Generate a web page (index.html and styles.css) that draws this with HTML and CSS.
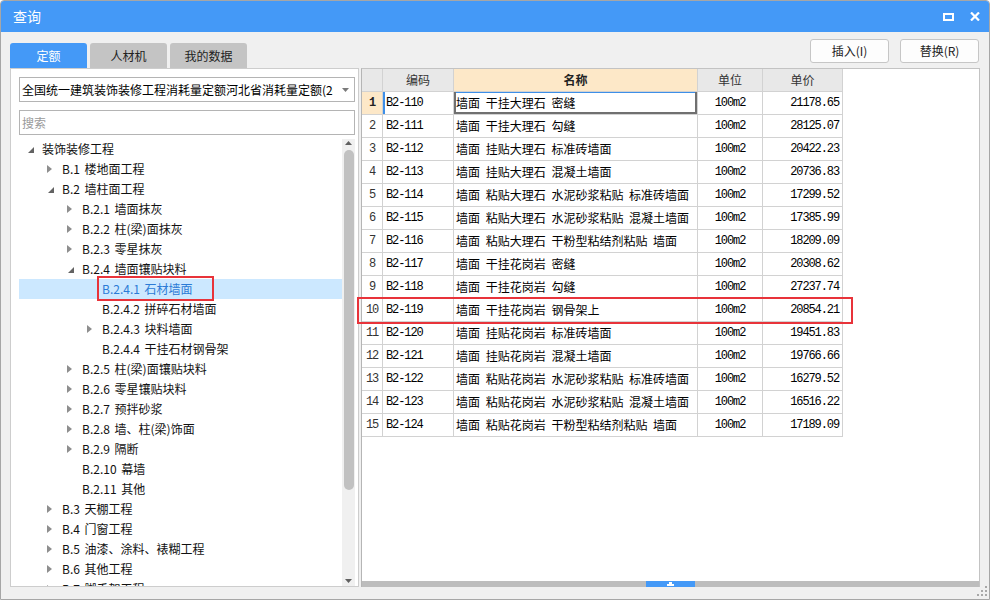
FILE: index.html
```html
<!DOCTYPE html>
<html lang="zh-CN">
<head>
<meta charset="utf-8">
<title>查询</title>
<link rel="stylesheet" href="styles.css">
</head>
<body>
<div class="window">
  <div class="titlebar">
    <span class="title">查询</span>
    <div class="winbtns">
      <svg class="wbtn" width="11" height="8" viewBox="0 0 11 8"><rect x="1" y="1" width="9" height="6" fill="none" stroke="#fff" stroke-width="2"/><rect x="0" y="0" width="11" height="2" fill="#fff"/></svg>
      <svg class="wbtn" width="10" height="9" viewBox="0 0 10 9"><path d="M1 0.5 L9 8.5 M9 0.5 L1 8.5" stroke="#fff" stroke-width="2.2" fill="none"/></svg>
    </div>
  </div>

  <div class="topbar">
    <div class="tabs">
      <div class="tab active">定额</div>
      <div class="tab">人材机</div>
      <div class="tab">我的数据</div>
    </div>
    <div class="actions">
      <button class="btn">插入(I)</button>
      <button class="btn">替换(R)</button>
    </div>
  </div>

  <div class="main">
    <div class="left">
      <div class="select">
        <span class="select-text">全国统一建筑装饰装修工程消耗量定额河北省消耗量定额(2012)</span>
        <svg class="select-arrow" width="7" height="4" viewBox="0 0 7 4"><path d="M0 0 H7 L3.5 4 Z" fill="#7a7a7a"/></svg>
      </div>
      <div class="search">搜索</div>
      <div class="tree">
        <div class="tree-list">
          <div class="node l0"><span class="tw"><svg class="exp" width="6" height="6" viewBox="0 0 6 6"><path d="M6 0 V6 H0 Z" fill="#636363"/></svg></span>装饰装修工程</div>
          <div class="node l1"><span class="tw"><svg class="col" width="5" height="8" viewBox="0 0 5 8"><path d="M0 0 L5 4 L0 8 Z" fill="#8e8e8e"/></svg></span>B.1 楼地面工程</div>
          <div class="node l1"><span class="tw"><svg class="exp" width="6" height="6" viewBox="0 0 6 6"><path d="M6 0 V6 H0 Z" fill="#636363"/></svg></span>B.2 墙柱面工程</div>
          <div class="node l2"><span class="tw"><svg class="col" width="5" height="8" viewBox="0 0 5 8"><path d="M0 0 L5 4 L0 8 Z" fill="#8e8e8e"/></svg></span>B.2.1 墙面抹灰</div>
          <div class="node l2"><span class="tw"><svg class="col" width="5" height="8" viewBox="0 0 5 8"><path d="M0 0 L5 4 L0 8 Z" fill="#8e8e8e"/></svg></span>B.2.2 柱(梁)面抹灰</div>
          <div class="node l2"><span class="tw"><svg class="col" width="5" height="8" viewBox="0 0 5 8"><path d="M0 0 L5 4 L0 8 Z" fill="#8e8e8e"/></svg></span>B.2.3 零星抹灰</div>
          <div class="node l2"><span class="tw"><svg class="exp" width="6" height="6" viewBox="0 0 6 6"><path d="M6 0 V6 H0 Z" fill="#636363"/></svg></span>B.2.4 墙面镶贴块料</div>
          <div class="node l3 selected"><span class="tw"></span>B.2.4.1 石材墙面</div>
          <div class="node l3"><span class="tw"></span>B.2.4.2 拼碎石材墙面</div>
          <div class="node l3"><span class="tw"><svg class="col" width="5" height="8" viewBox="0 0 5 8"><path d="M0 0 L5 4 L0 8 Z" fill="#8e8e8e"/></svg></span>B.2.4.3 块料墙面</div>
          <div class="node l3"><span class="tw"></span>B.2.4.4 干挂石材钢骨架</div>
          <div class="node l2"><span class="tw"><svg class="col" width="5" height="8" viewBox="0 0 5 8"><path d="M0 0 L5 4 L0 8 Z" fill="#8e8e8e"/></svg></span>B.2.5 柱(梁)面镶贴块料</div>
          <div class="node l2"><span class="tw"><svg class="col" width="5" height="8" viewBox="0 0 5 8"><path d="M0 0 L5 4 L0 8 Z" fill="#8e8e8e"/></svg></span>B.2.6 零星镶贴块料</div>
          <div class="node l2"><span class="tw"><svg class="col" width="5" height="8" viewBox="0 0 5 8"><path d="M0 0 L5 4 L0 8 Z" fill="#8e8e8e"/></svg></span>B.2.7 预拌砂浆</div>
          <div class="node l2"><span class="tw"><svg class="col" width="5" height="8" viewBox="0 0 5 8"><path d="M0 0 L5 4 L0 8 Z" fill="#8e8e8e"/></svg></span>B.2.8 墙、柱(梁)饰面</div>
          <div class="node l2"><span class="tw"><svg class="col" width="5" height="8" viewBox="0 0 5 8"><path d="M0 0 L5 4 L0 8 Z" fill="#8e8e8e"/></svg></span>B.2.9 隔断</div>
          <div class="node l2"><span class="tw"></span>B.2.10 幕墙</div>
          <div class="node l2"><span class="tw"></span>B.2.11 其他</div>
          <div class="node l1"><span class="tw"><svg class="col" width="5" height="8" viewBox="0 0 5 8"><path d="M0 0 L5 4 L0 8 Z" fill="#8e8e8e"/></svg></span>B.3 天棚工程</div>
          <div class="node l1"><span class="tw"><svg class="col" width="5" height="8" viewBox="0 0 5 8"><path d="M0 0 L5 4 L0 8 Z" fill="#8e8e8e"/></svg></span>B.4 门窗工程</div>
          <div class="node l1"><span class="tw"><svg class="col" width="5" height="8" viewBox="0 0 5 8"><path d="M0 0 L5 4 L0 8 Z" fill="#8e8e8e"/></svg></span>B.5 油漆、涂料、裱糊工程</div>
          <div class="node l1"><span class="tw"><svg class="col" width="5" height="8" viewBox="0 0 5 8"><path d="M0 0 L5 4 L0 8 Z" fill="#8e8e8e"/></svg></span>B.6 其他工程</div>
          <div class="node l1"><span class="tw"><svg class="col" width="5" height="8" viewBox="0 0 5 8"><path d="M0 0 L5 4 L0 8 Z" fill="#8e8e8e"/></svg></span>B.7 脚手架工程</div>
        </div>
        <div class="vscroll">
          <svg class="sarrow" width="7" height="4" viewBox="0 0 7 4"><path d="M3.5 0 L7 4 H0 Z" fill="#606060"/></svg>
          <div class="thumb"></div>
          <svg class="sarrow down" width="7" height="4" viewBox="0 0 7 4"><path d="M0 0 H7 L3.5 4 Z" fill="#606060"/></svg>
        </div>
      </div>
    </div>

    <div class="right">
      <div class="grid">
        <div class="c hd"></div><div class="c hd">编码</div><div class="c hd name-hd">名称</div><div class="c hd">单位</div><div class="c hd">单价</div>

        <div class="c num cur">1</div><div class="c code code-cur">B2-110</div><div class="c name name-cur">墙面 干挂大理石 密缝</div><div class="c unit">100m2</div><div class="c price">21178.65</div>
        <div class="c num">2</div><div class="c code">B2-111</div><div class="c name">墙面 干挂大理石 勾缝</div><div class="c unit">100m2</div><div class="c price">28125.07</div>
        <div class="c num">3</div><div class="c code">B2-112</div><div class="c name">墙面 挂贴大理石 标准砖墙面</div><div class="c unit">100m2</div><div class="c price">20422.23</div>
        <div class="c num">4</div><div class="c code">B2-113</div><div class="c name">墙面 挂贴大理石 混凝土墙面</div><div class="c unit">100m2</div><div class="c price">20736.83</div>
        <div class="c num">5</div><div class="c code">B2-114</div><div class="c name">墙面 粘贴大理石 水泥砂浆粘贴 标准砖墙面</div><div class="c unit">100m2</div><div class="c price">17299.52</div>
        <div class="c num">6</div><div class="c code">B2-115</div><div class="c name">墙面 粘贴大理石 水泥砂浆粘贴 混凝土墙面</div><div class="c unit">100m2</div><div class="c price">17385.99</div>
        <div class="c num">7</div><div class="c code">B2-116</div><div class="c name">墙面 粘贴大理石 干粉型粘结剂粘贴 墙面</div><div class="c unit">100m2</div><div class="c price">18209.09</div>
        <div class="c num">8</div><div class="c code">B2-117</div><div class="c name">墙面 干挂花岗岩 密缝</div><div class="c unit">100m2</div><div class="c price">20308.62</div>
        <div class="c num">9</div><div class="c code">B2-118</div><div class="c name">墙面 干挂花岗岩 勾缝</div><div class="c unit">100m2</div><div class="c price">27237.74</div>
        <div class="c num">10</div><div class="c code">B2-119</div><div class="c name">墙面 干挂花岗岩 钢骨架上</div><div class="c unit">100m2</div><div class="c price">20854.21</div>
        <div class="c num">11</div><div class="c code">B2-120</div><div class="c name">墙面 挂贴花岗岩 标准砖墙面</div><div class="c unit">100m2</div><div class="c price">19451.83</div>
        <div class="c num">12</div><div class="c code">B2-121</div><div class="c name">墙面 挂贴花岗岩 混凝土墙面</div><div class="c unit">100m2</div><div class="c price">19766.66</div>
        <div class="c num">13</div><div class="c code">B2-122</div><div class="c name">墙面 粘贴花岗岩 水泥砂浆粘贴 标准砖墙面</div><div class="c unit">100m2</div><div class="c price">16279.52</div>
        <div class="c num">14</div><div class="c code">B2-123</div><div class="c name">墙面 粘贴花岗岩 水泥砂浆粘贴 混凝土墙面</div><div class="c unit">100m2</div><div class="c price">16516.22</div>
        <div class="c num">15</div><div class="c code">B2-124</div><div class="c name">墙面 粘贴花岗岩 干粉型粘结剂粘贴 墙面</div><div class="c unit">100m2</div><div class="c price">17189.09</div>
      </div>
      <div class="splitter">
        <div class="split-handle"><svg width="7" height="4" viewBox="0 0 7 4"><path d="M2 0 H5 V2 H7 V4 H0 V2 H2 Z" fill="#fff"/></svg></div>
      </div>
    </div>
  </div>

  <div class="mark mark-tree"></div>
  <div class="mark mark-row"></div>
  <svg class="grip" width="10" height="10" viewBox="0 0 10 10" fill="#a8a8a8">
    <rect x="8" y="0" width="2" height="2"/><rect x="4" y="4" width="2" height="2"/><rect x="8" y="4" width="2" height="2"/>
    <rect x="0" y="8" width="2" height="2"/><rect x="4" y="8" width="2" height="2"/><rect x="8" y="8" width="2" height="2"/>
  </svg>
</div>
</body>
</html>
```
FILE: styles.css
```css
* { box-sizing: border-box; }
html, body { margin: 0; padding: 0; }
body {
  font-family: "Noto Sans CJK SC", "Noto Sans", sans-serif;
  font-size: 12px;
  color: #1a1a1a;
  background: #ffffff;
}
.window {
  position: relative;
  width: 990px;
  height: 600px;
  border: 1px solid #a6a6a6;
  border-radius: 4px 4px 0 0;
  background: #f0f0f0;
  overflow: hidden;
  display: flex;
  flex-direction: column;
}
.titlebar {
  height: 31px;
  flex: none;
  background: #4499f7;
  display: flex;
  align-items: center;
  justify-content: space-between;
  padding: 0 9px 0 12px;
}
.title {
  color: #fff;
  font-size: 14px;
  line-height: 31px;
}
.winbtns { display: flex; align-items: center; gap: 16px; }
.wbtn { display: block; }

.topbar {
  height: 36px;
  flex: none;
  display: flex;
  justify-content: space-between;
  padding: 0 10px 0 9px;
}
.tabs { display: flex; align-self: flex-end; gap: 3px; }
.tab {
  width: 77px;
  height: 25px;
  line-height: 25px;
  text-align: center;
  background: #c4c4c4;
  color: #222;
  border-radius: 3px 3px 0 0;
  font-size: 12px;
}
.tab.active { background: #4499f7; color: #fff; }
.actions { display: flex; gap: 11px; padding-top: 7px; }
.btn {
  width: 79px;
  height: 24px;
  border: 1px solid #c6c6c6;
  border-radius: 3px;
  background: #fdfdfd;
  font-family: "Noto Sans CJK SC", "Noto Sans", sans-serif;
  font-size: 12px;
  color: #222;
  padding: 0;
  line-height: 22px;
}

.main {
  height: 519px;
  flex: none;
  display: flex;
  gap: 2px;
  padding: 0 9px 0 9px;
}
.left {
  width: 349px;
  background: #fff;
  border: 1px solid #cdcdcd;
  padding: 8px 3px 0 8px;
  display: flex;
  flex-direction: column;
}
.select {
  height: 25px;
  border: 1px solid #b4b4b4;
  display: flex;
  align-items: center;
  padding: 0 5px 0 2px;
  flex: none;
}
.select-text {
  flex: 1;
  white-space: nowrap;
  overflow: hidden;
  line-height: 23px;
  color: #000;
}
.select-arrow { margin-left: 9px; flex: none; }
.search {
  margin-top: 8px;
  height: 25px;
  border: 1px solid #b4b4b4;
  padding-left: 2px;
  line-height: 23px;
  color: #9a9a9a;
  flex: none;
}
.tree {
  margin-top: 4px;
  flex: 1;
  display: flex;
  min-height: 0;
}
.tree-list {
  flex: 1;
  overflow: hidden;
}
.node {
  height: 20px;
  line-height: 20px;
  display: flex;
  align-items: center;
  white-space: pre;
  word-spacing: 2px;
  color: #111;
}
.node.l0 { padding-left: 7px; }
.node.l1 { padding-left: 27px; }
.node.l2 { padding-left: 47px; }
.node.l3 { padding-left: 67px; }
.tw {
  width: 16px;
  height: 20px;
  flex: none;
  display: flex;
  align-items: center;
}
.tw .exp { margin-left: 2px; margin-top: 2px; }
.tw .col { margin-left: 1px; }
.node.selected { background: #cce8ff; color: #2b7bd6; }

.vscroll {
  width: 13px;
  flex: none;
  background: #f0f0f0;
  display: flex;
  flex-direction: column;
  align-items: center;
  padding: 2px 0 3px 0;
}
.sarrow { display: block; flex: none; }
.thumb {
  margin-top: 5px;
  width: 10px;
  height: 340px;
  border-radius: 5px;
  background: #c1c1c1;
  flex: none;
}
.sarrow.down { margin-top: auto; }

.right {
  width: 619px;
  background: #fff;
  border-top: 1px solid #c3c3c3;
  border-left: 1px solid #b5b5b5;
  border-right: 1px solid #c3c3c3;
  display: flex;
  flex-direction: column;
}
.grid {
  display: grid;
  grid-template-columns: 21px 71px 244px 65px 80px;
  grid-auto-rows: 23px;
  width: 481px;
}
.c {
  border-right: 1px solid #d2d2d2;
  border-bottom: 1px solid #d2d2d2;
  line-height: 22px;
  white-space: nowrap;
  overflow: hidden;
  color: #000;
}
.hd {
  background: #e8e8e8;
  text-align: center;
  color: #333;
  font-size: 12px;
}
.hd.name-hd { background: #fde8c8; font-weight: bold; color: #222; }
.num, .code, .unit, .price {
  font-family: "Liberation Mono", "DejaVu Sans Mono", monospace;
  font-size: 12px;
  letter-spacing: -1.1px;
}
.num { text-align: center; color: #333; }
.num.cur { background: #fde8c8; font-weight: bold; color: #222; }
.code { padding-left: 3px; }
.name { padding-left: 2px; word-spacing: 3px; }
.unit { text-align: center; }
.price { text-align: right; padding-right: 3px; }
.code-cur { box-shadow: inset 2px 0 0 #3d8fe8; }
.name-cur {
  box-shadow: inset 2px 0 0 #707070, inset -2px 0 0 #707070, inset 0 -2px 0 #707070, inset 0 1px 0 #3d8fe8;
}

.splitter {
  margin-top: auto;
  height: 6px;
  background: #bdbdbd;
  padding-left: 284px;
  flex: none;
}
.split-handle {
  width: 49px;
  height: 6px;
  background: #4499f7;
  display: flex;
  justify-content: center;
  align-items: flex-end;
  padding-bottom: 1px;
}
.split-handle svg { display: block; }

.mark {
  position: absolute;
  border: 2px solid #e8333a;
}
.mark-tree { left: 96px; top: 275px; width: 117px; height: 25px; }
.mark-row { left: 356px; top: 296px; width: 496px; height: 27px; }
.grip { position: absolute; right: 2px; bottom: 3px; }
```
